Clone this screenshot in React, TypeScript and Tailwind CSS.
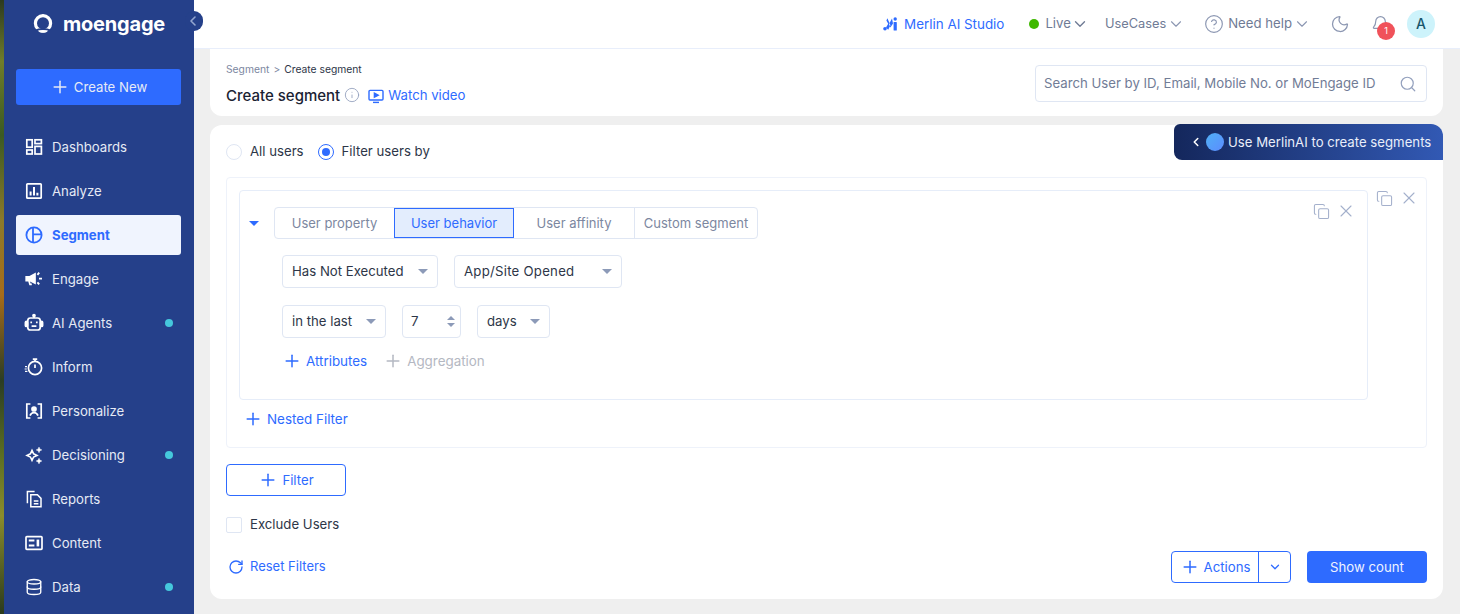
import { ChevronDown, ChevronLeft, Copy, Database, Info, Moon, Bell, Plus, RotateCw, Search, X, CircleHelp } from "lucide-react";
import type { ReactNode } from "react";

const ic = { width: 20, height: 20, viewBox: "0 0 20 20", fill: "none", stroke: "currentColor", strokeWidth: 1.7 };

const DashboardsIcon = () => (
  <svg {...ic}>
    <rect x="2.800" y="2.800" width="5.400" height="7.400" />
    <rect x="11" y="2.800" width="6.400" height="3.800" />
    <rect x="2.800" y="13" width="5.400" height="4" />
    <rect x="11" y="9.400" width="6.400" height="7.600" />
  </svg>
);
const AnalyzeIcon = () => (
  <svg {...ic}>
    <rect x="2.800" y="2.800" width="14.400" height="14.400" rx="0.800" />
    <path d="M6.600 14.400v-4M10 14.400V6M13.400 14.400v-2.600" strokeWidth="2" />
  </svg>
);
const SegmentIcon = () => (
  <svg {...ic} strokeWidth="1.800">
    <circle cx="10" cy="10" r="7.600" />
    <path d="M9 2.600v14.800M9 9.400h8.400" />
  </svg>
);
const EngageIcon = () => (
  <svg {...ic}>
    <path d="M2.200 7.800h3.600l5.200-2.800v9.200l-5.200-2.600H2.200z" fill="currentColor" />
    <path d="M5 12l1 3.400h1.800" />
    <path d="M13.400 5.800l1.800-2.200M15 9.600h3M13.400 13.400l1.800 2" strokeWidth="1.900" />
  </svg>
);
const AgentIcon = () => (
  <svg {...ic}>
    <rect x="3.800" y="5" width="12.400" height="12" rx="2.600" />
    <path d="M10 5V2.400" />
    <circle cx="10" cy="2.600" r="1" fill="currentColor" />
    <rect x="1.400" y="8.400" width="2" height="5" rx="1" fill="currentColor" />
    <rect x="16.600" y="8.400" width="2" height="5" rx="1" fill="currentColor" />
    <path d="M7.200 8.600v1.600M12.800 8.600v1.600M7.600 13.200h4.800" />
  </svg>
);
const InformIcon = () => (
  <svg {...ic}>
    <circle cx="11" cy="11" r="6.600" />
    <path d="M8.800 2.200h4.400M11 2.400v2M11 7.600V11" />
    <path d="M1 9.600h2M.6 12h2.200M1 14.400h2.400" strokeWidth="1.200" />
  </svg>
);
const PersonalizeIcon = () => (
  <svg {...ic}>
    <path d="M6.400 3H2.800v14h3.600M13.600 3h3.600v14h-3.600" />
    <circle cx="10" cy="8" r="2" fill="currentColor" />
    <path d="M6 14.600c.8-2 2.200-3 4-3s3.200 1 4 3" />
  </svg>
);
const DecisioningIcon = () => (
  <svg width="20" height="20" viewBox="0 0 20 20" fill="none" stroke="currentColor">
    <path d="M8 5.400l1.600 3.400 3.400 1.600-3.400 1.600L8 15.400 6.400 12 3 10.400l3.400-1.600z" strokeWidth="1.600" />
    <path d="M15 2l.9 2 2 .9-2 .9-.9 2-.9-2-2-.9 2-.9zM15 13.200l.9 1.900 2 .9-2 .9-.9 2-.9-2-2-.9 2-.9z" fill="currentColor" strokeWidth="0.400" />
  </svg>
);
const ReportsIcon = () => (
  <svg {...ic} strokeWidth="1.500">
    <path d="M6.800 17.800V5.800h6.600l3.600 3.600v8.400z" />
    <path d="M3.400 14.200V2.400h7.200" />
    <path d="M9.800 12h4.600M9.800 14.800h4.600" />
  </svg>
);
const ContentIcon = () => (
  <svg {...ic}>
    <rect x="2" y="3.600" width="16" height="12.800" rx="0.800" />
    <path d="M4.800 7.600h5.600M4.800 12.400h5.600" strokeWidth="2" />
    <rect x="12.600" y="6.600" width="2.600" height="6.800" fill="currentColor" stroke="none" />
  </svg>
);
const MerlinIcon = () => (
  <svg width="16" height="14" viewBox="0 0 16 14" fill="currentColor">
    <circle cx="2" cy="11.800" r="1.800" />
    <path d="M4.400 1.200 7.400 8.200 5.200 12.800 3 10.400l2.200-3.600-1.800-3.400zM9 1.400 6 7l1.400 3.600L10 6.400z" />
    <circle cx="12.200" cy="2" r="1.700" />
    <rect x="10.600" y="5" width="3.200" height="8.600" rx="0.600" />
  </svg>
);
const VideoIcon = () => (
  <svg width="16" height="16" viewBox="0 0 16 16" fill="none" stroke="currentColor" strokeWidth="1.400">
    <rect x="1" y="2.400" width="14" height="9.600" rx="1" />
    <path d="M5 14.400h6" />
    <path d="M6.400 5.200 10.200 7.200 6.400 9.200z" fill="currentColor" />
  </svg>
);

const Caret = ({ className }: { className: string }) => (
  <svg width="10" height="5" viewBox="0 0 10 5" className={className} fill="currentColor">
    <path d="M0 0h10L5 5z" />
  </svg>
);

const nav: { label: string; icon: ReactNode; dot?: boolean; active?: boolean }[] = [
  { label: "Dashboards", icon: <DashboardsIcon /> },
  { label: "Analyze", icon: <AnalyzeIcon /> },
  { label: "Segment", icon: <SegmentIcon />, active: true },
  { label: "Engage", icon: <EngageIcon /> },
  { label: "AI Agents", icon: <AgentIcon />, dot: true },
  { label: "Inform", icon: <InformIcon /> },
  { label: "Personalize", icon: <PersonalizeIcon /> },
  { label: "Decisioning", icon: <DecisioningIcon />, dot: true },
  { label: "Reports", icon: <ReportsIcon /> },
  { label: "Content", icon: <ContentIcon /> },
  { label: "Data", icon: <Database size={18} strokeWidth={1.8} />, dot: true },
];

function Sidebar() {
  return (
    <aside className="relative z-10 w-[190px] shrink-0 bg-[#25408a] text-[#e6eaf5]">
      <div className="flex h-[48px] items-center pl-[29px] text-white">
        <svg width="20" height="20" viewBox="0 0 20 20" className="mr-[10px]">
          <circle cx="10" cy="9.200" r="7.600" fill="none" stroke="currentColor" strokeWidth="3.200" />
          <path d="M3 16.400C6 14.400 14 14.400 17 16.400" fill="none" stroke="#25408a" strokeWidth="2" />
          <path d="M5.400 17.200C8 16.200 12 16.200 14.600 17.200 12.400 19.400 7.600 19.400 5.400 17.200z" fill="currentColor" />
        </svg>
        <span className="text-[20px] leading-none font-bold tracking-[-0.2px]">moengage</span>
      </div>
      <button className="mx-3 mt-[21px] flex h-[36px] w-[165px] items-center justify-center gap-[4px] rounded-[3px] bg-[#2e6bff] text-[13.200px]">
        <Plus size={20} strokeWidth={1.800} />
        <span className="pt-[1px]">Create New</span>
      </button>
      <nav className="mt-[22px] flex flex-col gap-1 pl-3">
        {nav.map((n) => (
          <div
            key={n.label}
            className={`flex h-[40px] w-[165px] items-center gap-[8px] rounded-[3px] pl-[8px] text-[13.200px] ${
              n.active ? "bg-[#f0f4fe] font-bold text-[#2e6bff]" : ""
            }`}
          >
            <span className={`flex w-[20px] justify-center ${n.active ? "text-[#2e6bff]" : "text-white"}`}>{n.icon}</span>
            <span className="flex-1 pt-[2px]">{n.label}</span>
            {n.dot && <span className="mr-[8px] h-2 w-2 rounded-full bg-[#45c8dc]" />}
          </div>
        ))}
      </nav>
      <button className="absolute top-[11px] -right-[9px] flex h-[20px] w-[18px] items-center justify-start rounded-full bg-[#25408a] text-[#93a5cf]">
        <ChevronLeft size={16} strokeWidth={2.400} />
      </button>
    </aside>
  );
}

function TopBar() {
  return (
    <header className="flex h-[49px] shrink-0 items-center justify-end border-b border-[#e8eefb] bg-white pr-[25px] text-[13.200px] text-[#6f7b95]">
      <span className="flex items-center gap-[5px] text-[13.400px] text-[#2e6bff]">
        <MerlinIcon />
        Merlin AI Studio
      </span>
      <span className="ml-[25px] flex items-center">
        <span className="mr-[6px] h-[10px] w-[10px] rounded-full bg-[#3fb800]" />
        Live
        <ChevronDown size={18} strokeWidth={1.800} />
      </span>
      <span className="ml-[16px] flex items-center text-[12.800px]">
        UseCases
        <ChevronDown size={18} strokeWidth={1.500} className="ml-[1px] text-[#8c97b2]" />
      </span>
      <span className="ml-[19px] flex items-center">
        <CircleHelp size={20} strokeWidth={1.400} className="mr-[4px] text-[#8c97b2]" />
        Need help
        <ChevronDown size={18} strokeWidth={1.500} className="ml-[1px] text-[#8c97b2]" />
      </span>
      <Moon size={20} strokeWidth={1.500} className="ml-[19px] text-[#8c97b2]" />
      <span className="relative ml-[21px] flex">
        <Bell size={19} strokeWidth={1.500} className="text-[#8c97b2]" />
        <span className="absolute top-[7px] left-[6px] flex h-[18px] w-[18px] items-center justify-center rounded-full bg-[#f0525a] text-[9px] text-white">1</span>
      </span>
      <span className="ml-[17px] flex h-[28px] w-[28px] items-center justify-center rounded-full bg-[#cdf3fb] text-sm font-medium text-[#17566b]">A</span>
    </header>
  );
}

function Select({ label, width }: { label: string; width: string }) {
  return (
    <div className={`flex h-[33px] items-center justify-between rounded-[4px] border border-[#dfe6f3] pr-[9px] pl-[9px] text-[13.200px] text-[#2d3648] ${width}`}>
      {label}
      <Caret className="text-[#8c9ab8]" />
    </div>
  );
}

function Tab({ label, active, width }: { label: string; active?: boolean; width: string }) {
  return (
    <div
      className={`flex h-full items-center justify-center pt-[1px] text-[13px] ${width} ${
        active ? "border border-[#2e6bff] bg-[#e3edfd] text-[#2e6bff]" : "text-[#7c879f]"
      }`}
    >
      {label}
    </div>
  );
}

function CopyClose({ className }: { className: string }) {
  return (
    <div className={`flex items-center text-[#a4b0cc] ${className}`}>
      <Copy size={17} strokeWidth={1.500} />
      <X size={20} strokeWidth={1.300} className="ml-[6px]" />
    </div>
  );
}

export default function App() {
  return (
    <div className="flex h-[614px] w-[1460px] overflow-hidden bg-[#efefef] font-['Inter','Noto_Sans',sans-serif]">
      <div className="w-[4px] shrink-0 bg-[linear-gradient(180deg,#2c3a20_0%,#6f7d2a_10%,#3b5a22_22%,#8c7a2a_36%,#a66c1a_48%,#2b3d24_62%,#5b6e22_74%,#8a8c2c_84%,#2a3a1c_100%)]" />
      <Sidebar />
      <div className="flex min-w-0 flex-1 flex-col">
        <TopBar />
        <main className="flex flex-1 flex-col gap-[9px] pr-[17px] pl-4">
          <section className="flex h-[67px] items-start justify-between rounded-b-[12px] bg-white px-4 pt-[14px]">
            <div>
              <div className="flex items-center text-[10.300px] leading-[13px]">
                <span className="text-[#7c879f]">Segment</span>
                <span className="mx-[4px] text-[#7c879f]">&gt;</span>
                <span className="text-[#2d3648]">Create segment</span>
              </div>
              <div className="mt-[9px] flex items-center">
                <span className="text-[15px] font-medium text-[#1a2233]">Create segment</span>
                <Info size={16} strokeWidth={1.300} className="mb-[2px] ml-[4px] text-[#93a0bd]" />
                <span className="ml-[8px] flex items-center gap-[4px] text-[13.200px] text-[#2e6bff]">
                  <VideoIcon />
                  Watch video
                </span>
              </div>
            </div>
            <div className="mt-[2px] flex h-[37px] w-[392px] items-center justify-between rounded-[4px] border border-[#dfe6f3] pr-[9px] pl-2 text-[13.200px] text-[#717c96]">
              Search User by ID, Email, Mobile No. or MoEngage ID
              <Search size={18} strokeWidth={1.600} className="text-[#93a0bd]" />
            </div>
          </section>

          <section className="relative flex h-[474px] flex-col rounded-[12px] bg-white px-4">
            <div className="absolute top-[-1px] right-0 flex h-[36px] w-[269px] items-center rounded-tl-[6px] rounded-tr-[12px] rounded-bl-[8px] bg-[linear-gradient(90deg,#14275c,#3259b4)] pl-[15px] text-[13.200px] text-[#e9eefa]">
              <ChevronLeft size={14} strokeWidth={2.600} className="text-white" />
              <span className="mr-[4px] ml-[3px] h-[18px] w-[18px] rounded-full bg-[linear-gradient(135deg,#4fb0f5,#5c8cff)]" />
              <span className="pt-[1px]">Use MerlinAI to create segments</span>
            </div>

            <div className="flex h-[52px] items-center pt-[1px] text-[13.200px] text-[#2d3648]">
              <span className="h-4 w-4 rounded-full border border-[#dfe6f3]" />
              <span className="ml-2">All users</span>
              <span className="ml-[14px] flex h-4 w-4 items-center justify-center rounded-full border border-[#2e6bff]">
                <span className="h-2 w-2 rounded-full bg-[#2e6bff]" />
              </span>
              <span className="ml-2">Filter users by</span>
            </div>

            <div className="h-[271px] rounded-[4px] border border-[#eef2fa] pt-3 pl-3">
              <div className="flex items-start">
                <div className="relative h-[210px] w-[1129px] rounded-[4px] border border-[#e6edf9] pt-4 pl-[9px]">
                  <div className="flex h-[32px] items-center">
                    <Caret className="text-[#2e6bff]" />
                    <div className="ml-[15px] flex h-full overflow-hidden rounded-[4px] border border-[#dfe6f3]">
                      <Tab label="User property" width="w-[119px]" />
                      <Tab label="User behavior" active width="w-[120px]" />
                      <Tab label="User affinity" width="w-[120px]" />
                      <Tab label="Custom segment" width="w-[123px] border-l border-[#dfe6f3]" />
                    </div>
                  </div>
                  <div className="mt-[16px] ml-[33px] flex gap-4">
                    <Select label="Has Not Executed" width="w-[156px]" />
                    <Select label="App/Site Opened" width="w-[168px] tracking-[0.25px]" />
                  </div>
                  <div className="mt-[17px] ml-[33px] flex gap-4">
                    <Select label="in the last" width="w-[104px]" />
                    <div className="flex h-[33px] w-[59px] items-center justify-between rounded-[4px] border border-[#dfe6f3] pr-[5px] pl-2 text-[13.200px] text-[#2d3648]">
                      7
                      <span className="flex flex-col gap-[3px] text-[#8c9ab8]">
                        <Caret className="h-[4px] w-[8px] rotate-180" />
                        <Caret className="h-[4px] w-[8px]" />
                      </span>
                    </div>
                    <Select label="days" width="w-[73px]" />
                  </div>
                  <div className="mt-[13px] ml-[33px] flex h-[20px] items-center text-[13.400px]">
                    <span className="flex items-center gap-[4px] text-[#2e6bff]">
                      <Plus size={20} strokeWidth={1.800} />
                      Attributes
                    </span>
                    <span className="ml-[16px] flex items-center gap-[4px] text-[#b4b8c2]">
                      <Plus size={20} strokeWidth={1.800} />
                      Aggregation
                    </span>
                  </div>
                  <CopyClose className="absolute top-[10px] right-[11px]" />
                </div>
                <CopyClose className="-mt-[2px] ml-[8px]" />
              </div>
              <div className="mt-[9px] ml-[4px] flex h-[20px] items-center gap-[4px] text-[13.400px] text-[#2e6bff]">
                <Plus size={20} strokeWidth={1.800} />
                Nested Filter
              </div>
            </div>

            <button className="mt-[16px] flex h-[32px] w-[120px] items-center justify-center gap-[4px] rounded-[4px] border border-[#2e6bff] text-[13.200px] text-[#2e6bff]">
              <Plus size={20} strokeWidth={1.800} />
              <span className="pt-[1px]">Filter</span>
            </button>
            <div className="mt-[21px] flex h-4 items-center gap-2 text-[13.200px] text-[#2d3648]">
              <span className="h-4 w-4 rounded-[2px] border border-[#dfe6f3]" />
              Exclude Users
            </div>
            <div className="mt-[18px] flex items-start justify-between">
              <span className="mt-[6px] ml-[2px] flex items-center gap-[6px] text-[13px] text-[#2e6bff]">
                <RotateCw size={16} strokeWidth={2} />
                Reset Filters
              </span>
              <div className="flex gap-4">
                <div className="flex h-[32px] w-[120px] rounded-[4px] border border-[#2e6bff] text-[13.200px] text-[#2e6bff]">
                  <span className="flex w-[87px] items-center justify-center gap-[4px] border-r border-[#2e6bff]">
                    <Plus size={20} strokeWidth={1.800} />
                    <span className="pt-[1px]">Actions</span>
                  </span>
                  <span className="flex flex-1 items-center justify-center">
                    <ChevronDown size={14} strokeWidth={2.200} />
                  </span>
                </div>
                <button className="h-[32px] w-[120px] rounded-[4px] bg-[#2e6bff] pt-[1px] text-[13.200px] text-[#eef3ff]">Show count</button>
              </div>
            </div>
          </section>
        </main>
      </div>
    </div>
  );
}
